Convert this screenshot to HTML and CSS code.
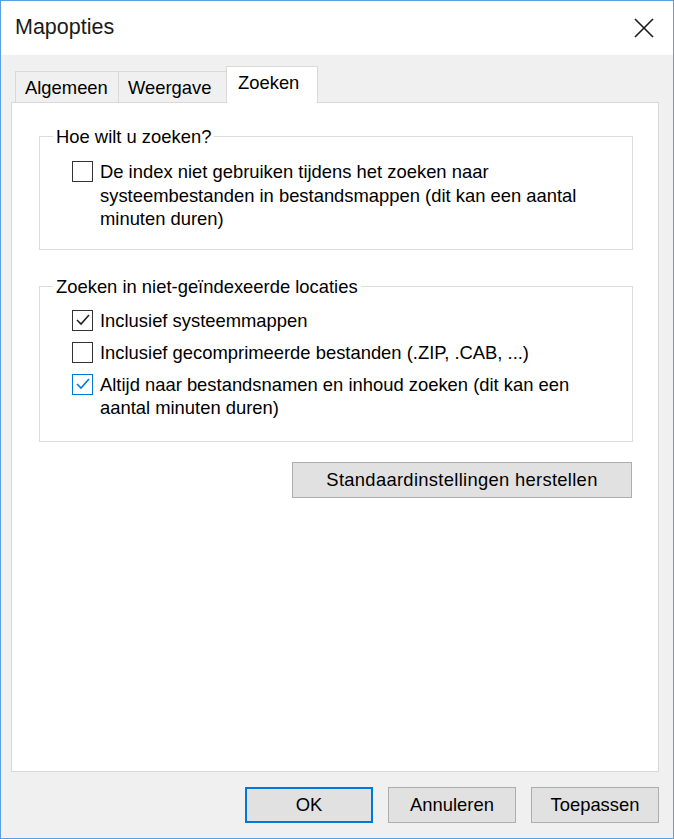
FILE: index.html
```html
<!DOCTYPE html>
<html lang="nl">
<head>
<meta charset="utf-8">
<title>Mapopties</title>
<link rel="stylesheet" href="styles.css">
</head>
<body>
<div class="window">
  <div class="titlebar">
    <span class="title">Mapopties</span>
    <span class="close">
      <svg width="20" height="20" viewBox="0 0 20 20"><path d="M1 1 L19 19 M19 1 L1 19" stroke="#1a1a1a" stroke-width="1.6" fill="none"/></svg>
    </span>
  </div>
  <div class="client">
    <div class="tabs">
      <div class="tab">Algemeen</div>
      <div class="tab">Weergave</div>
      <div class="tab active">Zoeken</div>
    </div>
    <div class="panel">
      <fieldset class="group g1">
        <legend>Hoe wilt u zoeken?</legend>
        <div class="check">
          <span class="box"></span>
          <span class="label">De index niet gebruiken tijdens het zoeken naar systeembestanden in bestandsmappen (dit kan een aantal minuten duren)</span>
        </div>
      </fieldset>
      <fieldset class="group g2">
        <legend>Zoeken in niet-geïndexeerde locaties</legend>
        <div class="check">
          <span class="box checked"><svg width="18" height="18" viewBox="0 0 18 18"><path d="M3 9 L7 13 L15 4" stroke="#222" stroke-width="1.6" fill="none"/></svg></span>
          <span class="label">Inclusief systeemmappen</span>
        </div>
        <div class="check">
          <span class="box"></span>
          <span class="label">Inclusief gecomprimeerde bestanden (.ZIP, .CAB, ...)</span>
        </div>
        <div class="check">
          <span class="box checked focus"><svg width="18" height="18" viewBox="0 0 18 18"><path d="M3 9 L7 13 L15 4" stroke="#0078d7" stroke-width="1.6" fill="none"/></svg></span>
          <span class="label">Altijd naar bestandsnamen en inhoud zoeken (dit kan een aantal minuten duren)</span>
        </div>
      </fieldset>
      <div class="restore-row">
        <button class="btn restore">Standaardinstellingen herstellen</button>
      </div>
    </div>
    <div class="footer">
      <button class="btn default">OK</button>
      <button class="btn">Annuleren</button>
      <button class="btn">Toepassen</button>
    </div>
  </div>
</div>
</body>
</html>
```

FILE: styles.css
```css
* { box-sizing: border-box; }
html, body { margin: 0; padding: 0; background: #ffffff; }
body {
  font-family: "Liberation Sans", Arial, sans-serif;
  font-size: 18.4px;
  color: #000;
}
.window {
  width: 674px;
  height: 839px;
  border: 1px solid #5aa0dc;
  display: flex;
  flex-direction: column;
  background: #f0f0f0;
}
.titlebar {
  height: 54px;
  flex: none;
  background: #ffffff;
  display: flex;
  align-items: center;
  justify-content: space-between;
  padding: 0 18px 0 14px;
}
.title {
  font-size: 21.5px;
  color: #1a1a1a;
  position: relative;
  top: -1px;
}
.close { display: flex; width: 20px; height: 20px; margin-right: 1px; }
.client {
  flex: 1;
  display: flex;
  flex-direction: column;
  padding: 12px 14px 15px 10px;
}
.tabs {
  display: flex;
  align-items: flex-end;
  height: 36px;
  padding-left: 4px;
  position: relative;
  z-index: 2;
  margin-bottom: -1px;
}
.tab {
  height: 31px;
  padding: 0 9px;
  border: 1px solid #d9d9d9;
  border-bottom: none;
  background: #f0f0f0;
  display: flex;
  align-items: center;
  margin-bottom: 1px;
  line-height: 1;
  padding-top: 2px;
  white-space: nowrap;
}
.tab + .tab { border-left: none; }
.tab:nth-child(1) { width: 104px; }
.tab:nth-child(2) { width: 108px; }
.tab.active {
  height: 37px;
  background: #ffffff;
  margin-bottom: 0;
  width: 92px;
  border-left: 1px solid #d9d9d9;
  margin-left: -1px;
  padding-left: 11px;
  padding-top: 0;
  padding-bottom: 3px;
}
.panel {
  height: 670px;
  background: #ffffff;
  border: 1px solid #d9d9d9;
  padding: 22px 25px 0 27px;
  display: flex;
  flex-direction: column;
}
.group {
  margin: 0;
  border: 1px solid #dcdcdc;
  padding: 0 10px 0 32px;
  min-width: 0;
}
.group legend {
  padding: 0 3px;
  margin-left: -19px;
  line-height: 23px;
  color: #000;
}
.g1 { padding-top: 12px; padding-bottom: 18px; }
.g2 { margin-top: 25px; padding-top: 11px; padding-bottom: 21px; }
.check {
  display: flex;
  align-items: flex-start;
  gap: 7px;
  line-height: 23.5px;
}
.check + .check { margin-top: 8.5px; }
.box {
  flex: none;
  width: 21px;
  height: 21px;
  border: 1.5px solid #333;
  background: #fff;
  margin-top: 1px;
  display: flex;
  align-items: center;
  justify-content: center;
}
.box.focus { border-color: #0078d7; }
.label { flex: none; width: 515px; }
.restore-row {
  display: flex;
  justify-content: flex-end;
  margin-top: 20px;
}
.btn {
  font-family: inherit;
  font-size: 18.4px;
  color: #000;
  background: #e1e1e1;
  border: 1px solid #adadad;
  height: 36px;
  padding: 0;
  margin: 0;
}
.restore { width: 340px; margin-right: 1px; letter-spacing: 0.3px; }
.footer {
  display: flex;
  justify-content: flex-end;
  gap: 15px;
  margin-top: 15px;
  padding-right: 0;
}
.footer .btn { width: 128px; }
.btn.default { border: 2px solid #0078d7; }
```
